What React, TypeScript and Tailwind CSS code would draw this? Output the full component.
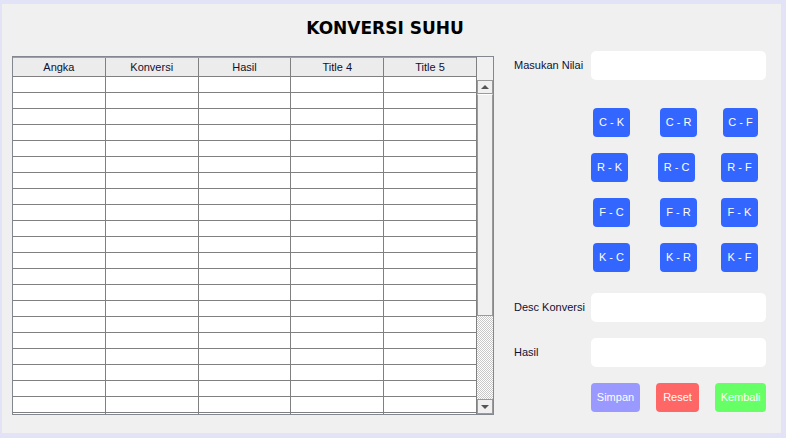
import React from 'react';

const headers = ['Angka', 'Konversi', 'Hasil', 'Title 4', 'Title 5'];

const buttonRows = [
    [
        { label: 'C - K', cls: 'ml-[2px] w-[37px]' },
        { label: 'C - R', cls: 'ml-[30px] w-[37px]' },
        { label: 'C - F', cls: 'ml-[26px] w-[35px]' },
    ],
    [
        { label: 'R - K', cls: 'ml-0 w-[37px]' },
        { label: 'R - C', cls: 'ml-[30px] w-[37px]' },
        { label: 'R - F', cls: 'ml-[26px] w-[37px]' },
    ],
    [
        { label: 'F - C', cls: 'ml-[2px] w-[37px]' },
        { label: 'F - R', cls: 'ml-[30px] w-[37px]' },
        { label: 'F - K', cls: 'ml-[24px] w-[37px]' },
    ],
    [
        { label: 'K - C', cls: 'ml-[2px] w-[37px]' },
        { label: 'K - R', cls: 'ml-[30px] w-[37px]' },
        { label: 'K - F', cls: 'ml-[24px] w-[37px]' },
    ],
];

const rows = Array.from({ length: 22 });

export default function App() {
    return (
        <div className="w-[786px] h-[438px] bg-[#e3e3f7] pt-[4px] pl-[2px] pr-[5px] pb-[5px] font-['Liberation_Sans',sans-serif] text-[11px] text-[#101030]">
            <div className="w-full h-full bg-[#f0f0f0] flex flex-col">
                {/* Title */}
                <div className="h-[47px] flex justify-center pt-[14px] pr-[13px]">
                    <h1 className="font-['DejaVu_Sans',sans-serif] text-[17px] leading-[20px] font-bold text-black">KONVERSI SUHU</h1>
                </div>

                <div className="flex flex-1">
                    {/* Table */}
                    <div className="ml-[10px] mt-[5px] w-[482px] h-[359px] border border-[#828790] flex overflow-hidden">
                        <div className="w-[463px] flex flex-col bg-white overflow-hidden">
                            <div className="flex h-[20px] shrink-0 bg-[#ececec] border-b border-[#808080] border-t border-t-[#a0a0a0]">
                                {headers.map((h, i) => (
                                    <div key={h} className={`flex-1 flex items-center justify-center leading-none ${i < 4 ? 'border-r border-[#808080]' : ''}`}>
                                        {h}
                                    </div>
                                ))}
                            </div>
                            {rows.map((_, r) => (
                                <div key={r} className="flex h-[16px] shrink-0 border-b border-[#808080]">
                                    {headers.map((h, i) => (
                                        <div key={h} className={`flex-1 ${i < 4 ? 'border-r border-[#808080]' : ''}`}></div>
                                    ))}
                                </div>
                            ))}
                        </div>
                        {/* Scrollbar */}
                        <div className="w-[17px] flex flex-col bg-[#f0f0f0] border-l border-[#808080]">
                            <div className="h-[23px] shrink-0"></div>
                            <div className="h-[14px] shrink-0 bg-[#f0f0f0] border border-[#9a9a9a] flex items-center justify-center">
                                <div className="w-0 h-0 border-l-[4px] border-r-[4px] border-b-[4px] border-l-transparent border-r-transparent border-b-[#555]"></div>
                            </div>
                            <div className="h-[222px] shrink-0 bg-[#f0f0f0] border border-[#9a9a9a] border-t-white"></div>
                            <div className="flex-1 bg-[repeating-conic-gradient(#c8c8c8_0%_25%,#ffffff_0%_50%)] bg-[length:2px_2px]"></div>
                            <div className="h-[15px] shrink-0 bg-[#f0f0f0] border border-[#9a9a9a] flex items-center justify-center">
                                <div className="w-0 h-0 border-l-[4px] border-r-[4px] border-t-[4px] border-l-transparent border-r-transparent border-t-[#555]"></div>
                            </div>
                        </div>
                    </div>

                    {/* Form */}
                    <div className="ml-[20px] flex flex-col">
                        <div className="flex items-center h-[29px]">
                            <span className="w-[77px]">Masukan Nilai</span>
                            <div className="w-[175px] h-[29px] bg-white rounded-[5px]"></div>
                        </div>

                        <div className="flex flex-col gap-[16px] mt-[28px] pl-[77px]">
                            {buttonRows.map((row, ri) => (
                                <div key={ri} className="flex h-[29px]">
                                    {row.map((b) => (
                                        <div key={b.label} className={`${b.cls} h-[29px] bg-[#3366ff] rounded-[4px] text-white flex items-center justify-center`}>
                                            {b.label}
                                        </div>
                                    ))}
                                </div>
                            ))}
                        </div>

                        <div className="flex items-center h-[29px] mt-[21px]">
                            <span className="w-[77px]">Desc Konversi</span>
                            <div className="w-[175px] h-[29px] bg-white rounded-[5px]"></div>
                        </div>
                        <div className="flex items-center h-[29px] mt-[16px]">
                            <span className="w-[77px]">Hasil</span>
                            <div className="w-[175px] h-[29px] bg-white rounded-[5px]"></div>
                        </div>

                        <div className="flex h-[29px] mt-[16px] pl-[77px] text-white">
                            <div className="w-[49px] h-[29px] bg-[#9999ff] rounded-[4px] flex items-center justify-center">Simpan</div>
                            <div className="ml-[16px] w-[43px] h-[29px] bg-[#ff6666] rounded-[4px] flex items-center justify-center">Reset</div>
                            <div className="ml-[16px] w-[51px] h-[29px] bg-[#66ff66] rounded-[4px] flex items-center justify-center">Kembali</div>
                        </div>
                    </div>
                </div>
            </div>
        </div>
    );
}
